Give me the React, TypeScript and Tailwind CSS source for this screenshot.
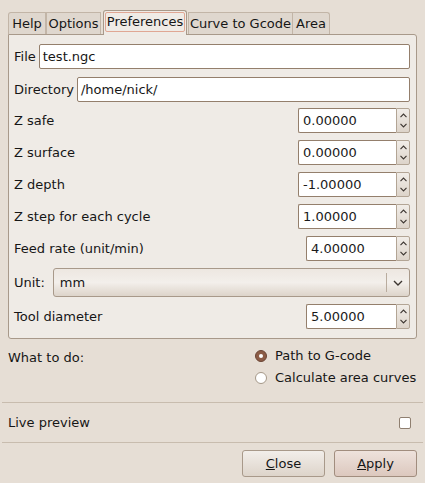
import React from "react";

const font = { fontFamily: '"DejaVu Sans", "Liberation Sans", sans-serif' };

function Chevron({ dir }: { dir: "up" | "down" }) {
  return (
    <svg width="7" height="5" viewBox="0 0 7 5" className="block">
      {dir === "up" ? (
        <path d="M0.5 4.2 L3.5 1 L6.5 4.2" fill="none" stroke="#3c3530" strokeWidth="1.1" />
      ) : (
        <path d="M0.5 0.8 L3.5 4 L6.5 0.8" fill="none" stroke="#3c3530" strokeWidth="1.1" />
      )}
    </svg>
  );
}

function SpinBox({ value, width }: { value: string; width: string }) {
  return (
    <div className={`flex h-[25px] ${width}`}>
      <div className="flex flex-1 items-center rounded-l-[2px] border border-r-0 border-[#947f6c] bg-white pl-[4px] text-[13px] text-[#1a1a1a]">
        {value}
      </div>
      <div className="flex w-[14px] flex-col items-center justify-center gap-[5px] rounded-r-[2px] border border-[#b3a595] bg-gradient-to-b from-[#f1ede8] to-[#ddd4ca]">
        <Chevron dir="up" />
        <Chevron dir="down" />
      </div>
    </div>
  );
}

function Row({ label, value, width }: { label: string; value: string; width: string }) {
  return (
    <div className="mt-[7px] flex h-[25px] items-center justify-between">
      <span>{label}</span>
      <SpinBox value={value} width={width} />
    </div>
  );
}

const tabs = [
  { name: "Help", w: "w-[38px]" },
  { name: "Options", w: "w-[55px]" },
];

export default function App() {
  return (
    <div className="h-[483px] w-[425px] overflow-hidden bg-[#e6ded5] text-[13px] text-[#161616]" style={font}>
      {/* tabs */}
      <div className="flex h-[34px] items-end pl-[8px] pt-[10px]">
        {tabs.map((t) => (
          <div
            key={t.name}
            className={`flex h-[22px] ${t.w} items-center justify-center border border-b-0 border-[#c2b5a7] bg-[#dfd7ce] first:rounded-tl-[3px]`}
          >
            {t.name}
          </div>
        ))}
        <div className="relative z-10 mb-[-1px] ml-[2px] flex h-[25px] w-[84px] items-start justify-center rounded-t-[3px] border border-b-0 border-[#a8998a] bg-[#efebe6] pt-[1px]">
          <div className="flex h-[20px] w-[80px] items-center justify-center rounded-[2px] border border-[#e0a794]">
            Preferences
          </div>
        </div>
        <div className="ml-[1px] flex h-[22px] w-[105px] items-center justify-center border border-b-0 border-[#c2b5a7] bg-[#dfd7ce]">
          Curve to Gcode
        </div>
        <div className="flex h-[22px] w-[37px] items-center justify-center rounded-tr-[3px] border border-b-0 border-l-0 border-[#c2b5a7] bg-[#dfd7ce]">
          Area
        </div>
      </div>

      {/* page */}
      <div className="mx-[8px] flex h-[305px] flex-col rounded-b-[3px] rounded-tr-[3px] border border-[#a8998a] bg-[#efebe6] pl-[5px] pr-[6px] pt-[9px]">
        <div className="flex h-[25px] items-center gap-[3px]">
          <span>File</span>
          <div className="flex h-full flex-1 items-center rounded-[2px] border border-[#947f6c] bg-white pl-[3px]">
            test.ngc
          </div>
        </div>
        <div className="mt-[8px] flex h-[25px] items-center gap-[3px]">
          <span>Directory</span>
          <div className="flex h-full flex-1 items-center rounded-[2px] border border-[#947f6c] bg-white pl-[3px]">
            /home/nick/
          </div>
        </div>
        <div className="mt-[-1px]">
          <Row label="Z safe" value="0.00000" width="w-[112px]" />
          <Row label="Z surface" value="0.00000" width="w-[112px]" />
          <Row label="Z depth" value="-1.00000" width="w-[112px]" />
          <Row label="Z step for each cycle" value="1.00000" width="w-[112px]" />
          <Row label="Feed rate (unit/min)" value="4.00000" width="w-[104px]" />
        </div>
        <div className="mt-[7px] flex h-[29px] items-center gap-[8px]">
          <span>Unit:</span>
          <div className="flex h-full flex-1 items-center rounded-[3px] border border-[#a8998a] bg-gradient-to-b from-[#ede7e1] via-[#f3efeb] to-[#ddd4ca]">
            <span className="flex-1 pl-[6px]">mm</span>
            <div className="h-[19px] w-px bg-[#b9ac9e]" />
            <div className="flex w-[22px] justify-center">
              <svg width="10" height="6" viewBox="0 0 10 6">
                <path d="M1 1 L5 5 L9 1" fill="none" stroke="#3c3530" strokeWidth="1.4" />
              </svg>
            </div>
          </div>
        </div>
        <Row label="Tool diameter" value="5.00000" width="w-[104px]" />
      </div>

      {/* what to do */}
      <div className="flex px-[8px] pt-[9px]">
        <span className="flex-1">What to do:</span>
        <div className="flex w-[162px] shrink-0 flex-col gap-[6px] whitespace-nowrap">
          <div className="flex h-[16px] items-center gap-[8px]">
            <div className="flex h-[12px] w-[12px] shrink-0 items-center justify-center rounded-full border border-[#6b4535] bg-[#8c5c46]">
              <div className="h-[4px] w-[4px] rounded-full bg-white" />
            </div>
            <span>Path to G-code</span>
          </div>
          <div className="flex h-[16px] items-center gap-[8px]">
            <div className="h-[12px] w-[12px] shrink-0 rounded-full border border-[#a59888] bg-white" />
            <span>Calculate area curves</span>
          </div>
        </div>
      </div>

      <div className="mx-[2px] mt-[16px] h-px bg-[#c8bcae]" />
      <div className="flex h-[39px] items-center justify-between pl-[8px] pr-[14px]">
        <span>Live preview</span>
        <div className="h-[12px] w-[12px] rounded-[2px] border border-[#8f7f70] bg-white" />
      </div>
      <div className="mx-[2px] h-px bg-[#c8bcae]" />

      <div className="flex justify-end gap-[9px] pr-[8px] pt-[7px]">
        <div className="flex h-[27px] w-[83px] items-center justify-center rounded-[3px] border border-[#a8998a] bg-gradient-to-b from-[#f2eeea] to-[#ddd4ca]">
          <span>
            <span className="underline">C</span>lose
          </span>
        </div>
        <div className="flex h-[27px] w-[83px] items-center justify-center rounded-[3px] border border-[#a18d7e] bg-gradient-to-b from-[#eee2dc] to-[#dcc8be]">
          <span>
            <span className="underline">A</span>pply
          </span>
        </div>
      </div>
    </div>
  );
}
